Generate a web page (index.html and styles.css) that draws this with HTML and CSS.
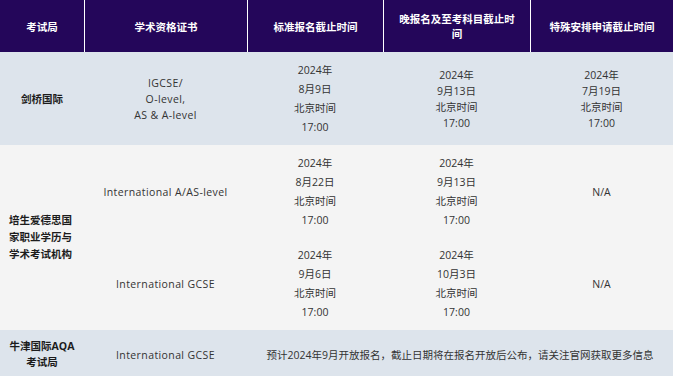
FILE: index.html
```html
<!DOCTYPE html>
<html lang="zh">
<head>
<meta charset="utf-8">
<link rel="stylesheet" href="styles.css">
</head>
<body>
<div class="table">
  <div class="th first">考试局</div>
  <div class="th">学术资格证书</div>
  <div class="th">标准报名截止时间</div>
  <div class="th">晚报名及至考科目截止时间</div>
  <div class="th">特殊安排申请截止时间</div>

  <div class="td blue org">剑桥国际</div>
  <div class="td blue lh16 lat">IGCSE/<br>O-level,<br>AS &amp; A-level</div>
  <div class="td blue lh19">2024年<br>8月9日<br>北京时间<br>17:00</div>
  <div class="td blue lh16">2024年<br>9月13日<br>北京时间<br>17:00</div>
  <div class="td blue lh16">2024年<br>7月19日<br>北京时间<br>17:00</div>

  <div class="td grey org org-left span2">培生爱德思国<br>家职业学历与<br>学术考试机构</div>
  <div class="td grey lat">International A/AS-level</div>
  <div class="td grey lh19">2024年<br>8月22日<br>北京时间<br>17:00</div>
  <div class="td grey lh19">2024年<br>9月13日<br>北京时间<br>17:00</div>
  <div class="td grey">N/A</div>
  <div class="td grey lat">International GCSE</div>
  <div class="td grey lh19">2024年<br>9月6日<br>北京时间<br>17:00</div>
  <div class="td grey lh19">2024年<br>10月3日<br>北京时间<br>17:00</div>
  <div class="td grey">N/A</div>

  <div class="td blue org lh15">牛津国际AQA<br>考试局</div>
  <div class="td blue lat">International GCSE</div>
  <div class="td blue span3">预计2024年9月开放报名，截止日期将在报名开放后公布，请关注官网获取更多信息</div>
</div>
</body>
</html>
```

FILE: styles.css
```css
html, body {
  margin: 0;
  padding: 0;
  overflow: hidden;
  background: #ffffff;
}

.table {
  display: grid;
  grid-template-columns: 84px 163px 136px 147px 143px;
  grid-template-rows: 52px 93px 93px 92px 49px;
  width: 673px;
  font-family: "Open Sans", "Noto Sans CJK SC", sans-serif;
  font-size: 10.5px;
  color: #333333;
}

.th {
  background: #24065a;
  color: #ffffff;
  font-weight: bold;
  line-height: 15px;
  border-left: 1px solid #ffffff;
  padding: 0 12px;
  display: flex;
  align-items: center;
  justify-content: center;
  text-align: center;
  font-family: "Noto Sans CJK SC", sans-serif;
}

.th.first {
  border-left: none;
}

.td {
  display: flex;
  align-items: center;
  justify-content: center;
  text-align: center;
  padding: 0 6px;
  line-height: 16px;
}

.lat {
  letter-spacing: 0.4px;
}

.blue {
  background: #dde4ec;
}

.grey {
  background: #f4f4f4;
}

.org {
  font-weight: bold;
  color: #1c1c1c;
}

.org-left {
  justify-content: flex-start;
  text-align: left;
  padding-left: 9px;
  line-height: 17px;
}

.lh16 { line-height: 16px; }
.lh19 { line-height: 19px; }
.lh15 { line-height: 15.5px; }

.span2 {
  grid-row: span 2;
}

.span3 {
  grid-column: span 3;
}
```
